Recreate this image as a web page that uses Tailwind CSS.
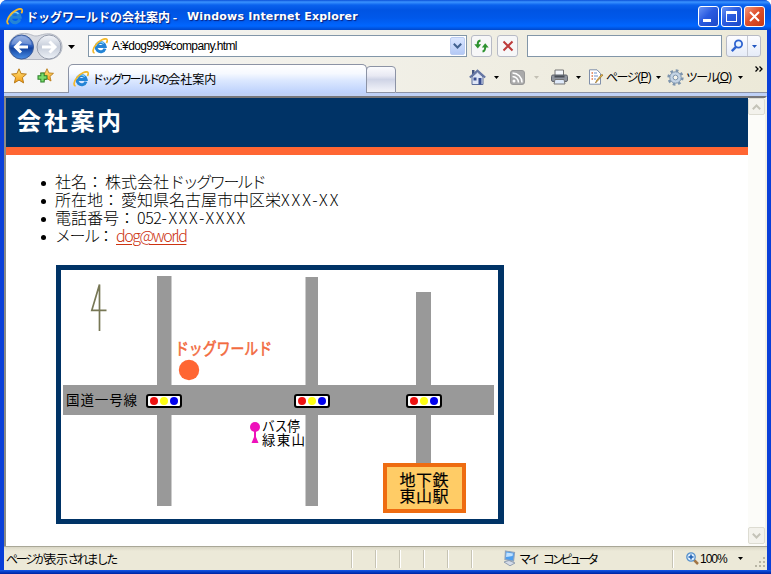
<!DOCTYPE html>
<html lang="ja">
<head>
<meta charset="utf-8">
<title>ドッグワールドの会社案内</title>
<script src="https://cdn.jsdelivr.net/npm/@tailwindcss/browser@4"></script>
</head>
<body class="w-[771px] h-[574px] overflow-hidden bg-white font-['Noto_Sans_CJK_JP',sans-serif] text-black">
<svg width="0" height="0" class="absolute">
  <defs>
    <linearGradient id="ball" x1="0" y1="0" x2="0" y2="1"><stop offset="0" stop-color="#7f9fdc"/><stop offset=".45" stop-color="#2c5fc0"/><stop offset=".55" stop-color="#12429f"/><stop offset="1" stop-color="#4a90e8"/></linearGradient>
    <linearGradient id="grey" x1="0" y1="0" x2="0" y2="1"><stop offset="0" stop-color="#f4f6fa"/><stop offset=".5" stop-color="#c6cdda"/><stop offset="1" stop-color="#eef2f8"/></linearGradient>
    <linearGradient id="gold" x1="0" y1="0" x2="0" y2="1"><stop offset="0" stop-color="#ffe680"/><stop offset="1" stop-color="#f59b12"/></linearGradient>
  </defs>
  <symbol id="ie" viewBox="0 0 16 16">
    <path d="M13 10.600A4.600 4.600 0 1 1 13.200 8.600H5" fill="none" stroke="#2484d6" stroke-width="3"/>
    <path d="M4.200 7.600A4.200 4.200 0 0 1 11.800 5.600" fill="none" stroke="#7fd0fa" stroke-width="1.200"/>
    <path d="M2.600 15C.2 14.600 .6 10.500 4.300 6.300C8.300 1.800 13.500 -.2 14.900 1.400C15.600 2.300 15.200 3.700 14.400 5" fill="none" stroke="#f3b92c" stroke-width="1.700"/>
  </symbol>
  <symbol id="star" viewBox="0 0 16 16">
    <path d="M8 .8 10.100 5.600 15.400 6.100 11.400 9.600 12.600 14.900 8 12.100 3.400 14.900 4.600 9.600 .6 6.100 5.900 5.600Z" fill="url(#gold)" stroke="#b87a18" stroke-width="1"/>
  </symbol>
  <symbol id="signal" viewBox="0 0 36 14">
    <rect x="1" y="1" width="34" height="12" rx="2" fill="#fff" stroke="#000" stroke-width="2"/>
    <circle cx="8" cy="7" r="4" fill="#ee1111"/><circle cx="18" cy="7" r="4" fill="#ffff11"/><circle cx="28" cy="7" r="4" fill="#0000ee"/>
  </symbol>
</svg>

<div class="w-[771px] h-[574px] flex flex-col rounded-t-[7px] overflow-hidden bg-[#0a3fd8]">
  <!-- title bar -->
  <header class="h-[30px] shrink-0 flex items-center pl-[6px] pr-[6px] bg-[linear-gradient(to_bottom,#0a50d8_0,#3a93ff_2px,#0a62ee_5px,#0054e3_10px,#0058ea_18px,#0066ff_26px,#0048cc_30px)]">
    <svg class="w-[17px] h-[17px] mt-[2px]"><use href="#ie"/></svg>
    <h1 class="ml-[3px] mt-[3px] flex text-white font-bold text-[12px] leading-[16px] whitespace-nowrap [text-shadow:1px_1px_1px_#0a1f7a]"><span class="w-[161px] tracking-[0px]">ドッグワールドの会社案内 -</span><span class="font-['DejaVu_Sans','Liberation_Sans',sans-serif] text-[11px] tracking-[0.18px]">Windows Internet Explorer</span></h1>
    <div class="ml-auto mt-[3px] flex gap-[2px]">
      <div class="w-[21px] h-[21px] rounded-[3px] border border-white bg-[linear-gradient(135deg,#6a94f5,#2a5be0_45%,#1c49c8)] p-[4px] flex items-end"><div class="w-[8px] h-[3px] bg-white"></div></div>
      <div class="w-[21px] h-[21px] rounded-[3px] border border-white bg-[linear-gradient(135deg,#6a94f5,#2a5be0_45%,#1c49c8)] p-[4px]"><div class="w-[11px] h-[11px] border border-t-[3px] border-white"></div></div>
      <div class="w-[21px] h-[21px] rounded-[3px] border border-white bg-[linear-gradient(135deg,#f09a80,#e0502c_45%,#c63a14)] flex items-center justify-center"><svg class="w-[13px] h-[13px]" viewBox="0 0 13 13"><path d="M2 2 11 11M11 2 2 11" stroke="#fff" stroke-width="2"/></svg></div>
    </div>
  </header>

  <div class="flex-1 min-h-0 mx-[4px] flex flex-col bg-[#ece9d8]">
    <!-- address row -->
    <div class="h-[33px] shrink-0 flex items-center pl-[4px] pb-px bg-linear-to-r from-[#f6f6f6] to-[#ece9d8]">
      <svg class="w-[56px] h-[29px] shrink-0" viewBox="0 0 56 29">
        <path d="M14 1.500C22 1 24 4 28 4S36 1 43 2C58 5 58 26 41 27.500H13C-3 25-3 4 14 1.500Z" fill="#d8dbe2" stroke="#b4b8c2"/>
        <circle cx="13.500" cy="15" r="12" fill="url(#ball)" stroke="#3b5c9c"/><path d="M3.500 13A10 9 0 0 1 23.500 13Q14 10 3.500 13" fill="#fff" opacity=".25"/>
        <path d="M20 15H8M13 9.500 7.500 15 13 20.500" fill="none" stroke="#fff" stroke-width="3"/>
        <circle cx="41" cy="15" r="12" fill="url(#grey)" stroke="#959cab"/>
        <path d="M34 15H46M41.500 9.500 47 15 41.500 20.500" fill="none" stroke="#fff" stroke-width="3"/>
      </svg>
      <svg class="w-[7px] h-[4px] ml-[4px] mt-[1px] shrink-0" viewBox="0 0 7 4"><path d="M0 0H7L3.500 4Z"/></svg>
      <div class="ml-[13px] w-[379px] h-[22px] shrink-0 border border-[#8296a8] bg-white flex items-center pl-[3px] pr-px">
        <svg class="w-[16px] h-[16px]"><use href="#ie"/></svg>
        <span class="ml-[4px] text-[12px] leading-[18px] font-['Liberation_Sans',sans-serif] tracking-[-0.62px]">A:¥dog999¥company.html</span>
        <div class="ml-auto w-[15px] h-[18px] rounded-[2px] bg-linear-to-b from-[#dbe6ff] to-[#b4c9f5] border border-[#bccdf2] flex items-center justify-center"><svg class="w-[9px] h-[6px]" viewBox="0 0 9 6"><path d="M.8 .8 4.500 4.500 8.200 .8" fill="none" stroke="#42618f" stroke-width="2"/></svg></div>
      </div>
      <div class="ml-[4px] w-[21px] h-[22px] shrink-0 rounded-[3px] border border-[#b7bac5] bg-[#f7f7f8] flex items-center justify-center">
        <svg class="w-[15px] h-[14px]" viewBox="0 0 15 14"><path d="M6.500 1.500Q3.800 2 3.800 4.500V6M11.200 8Q11.200 12 8.500 12.500" fill="none" stroke="#2d922f" stroke-width="2"/><path d="M.3 5.300H7.200L3.800 9.500ZM7.800 8.500H14.700L11.200 4.300Z" fill="#2d922f"/></svg>
      </div>
      <div class="ml-[5px] w-[21px] h-[22px] shrink-0 rounded-[3px] border border-[#b7bac5] bg-[#f7f7f8] flex items-center justify-center">
        <svg class="w-[12px] h-[12px]" viewBox="0 0 12 12"><path d="M1.500 1.500 10.500 10.500M10.500 1.500 1.500 10.500" stroke="#bd3a3a" stroke-width="2"/></svg>
      </div>
      <div class="ml-[9px] w-[195px] h-[22px] shrink-0 border border-[#8296a8] bg-white"></div>
      <div class="ml-[4px] w-[35px] h-[22px] shrink-0 rounded-[3px] border border-[#b7bac5] bg-linear-to-b from-[#fdfdff] to-[#e6ecf8] flex">
        <div class="w-[21px] border-r border-[#c4c8d2] flex items-center justify-center"><svg class="w-[14px] h-[14px]" viewBox="0 0 14 14"><circle cx="8.500" cy="5" r="3.600" fill="#e8f3ff" stroke="#2d62d0" stroke-width="1.800"/><path d="M6 7.800 1.800 12.200" stroke="#2d62d0" stroke-width="2.400"/></svg></div>
        <div class="flex-1 flex items-center justify-center"><svg class="w-[5px] h-[3px]" viewBox="0 0 5 3"><path d="M0 0H5L2.500 3Z" fill="#1f55c0"/></svg></div>
      </div>
    </div>

    <!-- tabs and command bar -->
    <div class="h-[30px] shrink-0 flex items-end bg-linear-to-r from-[#f6f6f6] to-[#ece9d8]">
      <div class="w-[66px] h-[30px] shrink-0 border-b border-[#8c93a5] flex items-start gap-[10px] pl-[7px] pt-[5px]">
        <svg class="w-[16px] h-[16px]"><use href="#star"/></svg>
        <svg class="w-[17px] h-[16px]" viewBox="0 0 17 16"><use href="#star" x="3" y="0" width="14" height="14"/><path d="M5.500 4.500V14.500M.5 9.500H10.500" stroke="#287f28" stroke-width="4.400"/><path d="M5.500 5.500V13.500M1.500 9.500H9.500" stroke="#79dc68" stroke-width="2.400"/></svg>
      </div>
      <div class="-ml-[2px] w-[299px] h-[29px] shrink-0 rounded-t-[5px] border border-b-0 border-[#8c93a5] bg-[linear-gradient(to_bottom,#fff,#f6f9ff_30%,#dce8ff_55%,#bcd1fc)] flex items-center pl-[4px]">
        <svg class="w-[16px] h-[16px]"><use href="#ie"/></svg>
        <span class="ml-[3px] text-[12px] leading-[16px] whitespace-nowrap tracking-[-2.6px]">ドッグワールドの<span class="tracking-normal pl-px">会社案内</span></span>
      </div>
      <div class="-ml-px w-[30px] h-[27px] shrink-0 rounded-t-[4px] border border-[#8c93a5] bg-[linear-gradient(to_bottom,#fbfbfd,#e8e9f3_35%,#cfd4e6_50%,#f4f5fa)]"></div>
      <div class="flex-1 h-[30px] border-b border-[#8c93a5] relative">
        <div class="flex items-center h-[28px] pl-[73px] text-[12px] leading-[16px] whitespace-nowrap">
          <svg class="w-[17px] h-[17px] shrink-0" viewBox="0 0 17 17"><path d="M3 8V15.500H14V8L8.500 3Z" fill="#dfe6f6" stroke="#5c6e9a"/><path d="M3 1H5.500V5L3 7Z" fill="#45557f"/><path d="M.8 8.500 8.500 1.500 16.200 8.500" fill="none" stroke="#6576a4" stroke-width="2"/><path d="M4.500 8.500H7.500V11.500H4.500ZM9.500 9H12.500V15.500H9.500Z" fill="#3b4f91"/></svg>
          <svg class="w-[5px] h-[3px] ml-[8px] shrink-0" viewBox="0 0 5 3"><path d="M0 0H5L2.500 3Z"/></svg>
          <svg class="w-[15px] h-[15px] ml-[11px] shrink-0" viewBox="0 0 15 15"><rect x=".5" y=".5" width="14" height="14" rx="2.500" fill="#aaa" stroke="#999"/><circle cx="4" cy="11" r="1.500" fill="#fff"/><path d="M2.500 6.500A6 6 0 0 1 8.500 12.500M2.500 3A9.500 9.500 0 0 1 12 12.500" fill="none" stroke="#fff" stroke-width="1.600"/></svg>
          <svg class="w-[5px] h-[3px] ml-[9px] shrink-0" viewBox="0 0 5 3"><path d="M0 0H5L2.500 3Z" fill="#c3c0b4"/></svg>
          <svg class="w-[17px] h-[16px] ml-[12px] shrink-0" viewBox="0 0 17 16"><path d="M4 6V1H12.500V6" fill="#f4f7fb" stroke="#777"/><rect x=".5" y="6" width="16" height="6.500" rx="1.500" fill="#8f949d" stroke="#60646d"/><path d="M3.500 7.500H13.500" stroke="#474c55" stroke-width="2"/><path d="M4 10.500H13L14 15H3Z" fill="#dfeafa" stroke="#777"/></svg>
          <svg class="w-[5px] h-[3px] ml-[8px] shrink-0" viewBox="0 0 5 3"><path d="M0 0H5L2.500 3Z"/></svg>
          <svg class="w-[16px] h-[16px] ml-[7px] shrink-0" viewBox="0 0 16 16"><path d="M1.500 .8H9L12.500 4.500V15.200H1.500Z" fill="#fff" stroke="#8190aa"/><path d="M3.500 4H5M3.500 7H5M3.500 10H5" stroke="#dd7747" stroke-width="1.500"/><path d="M6 4H9M6 7H10M6 10H8" stroke="#6c91ca"/><path d="M15 6 9 12.500 7.500 14 8.500 11.500 13.500 5.500Z" fill="#eabd54" stroke="#926c20" stroke-width=".7"/></svg>
          <span class="ml-[2px] w-[47px] flex tracking-[-1.5px]">ページ<span class="font-['Liberation_Sans'] tracking-[-0.8px]">(<u>P</u>)</span></span>
          <svg class="w-[5px] h-[3px] ml-[3px] shrink-0" viewBox="0 0 5 3"><path d="M0 0H5L2.500 3Z"/></svg>
          <svg class="w-[17px] h-[17px] ml-[6px] shrink-0" viewBox="0 0 17 17"><circle cx="8.500" cy="8.500" r="6.900" fill="none" stroke="#7d94ad" stroke-width="2.500" stroke-dasharray="2.700 2.720"/><circle cx="8.500" cy="8.500" r="5.700" fill="#c4d4e5" stroke="#7d94ad"/><circle cx="8.500" cy="8.500" r="2.400" fill="#f4f3eb" stroke="#7d94ad"/></svg>
          <span class="ml-[2px] w-[47px] flex tracking-[-1.8px]">ツール<span class="font-['Liberation_Sans'] tracking-[-0.8px]">(<u>O</u>)</span></span>
          <svg class="w-[5px] h-[3px] ml-[5px] shrink-0" viewBox="0 0 5 3"><path d="M0 0H5L2.500 3Z"/></svg>
        </div>
        <svg class="absolute right-[4px] top-[3px] w-[8px] h-[6px]" viewBox="0 0 8 6"><path d="M.5 .5 3 3 .5 5.500M4.500 .5 7 3 4.500 5.500" fill="none" stroke="#000" stroke-width="1.300"/></svg>
      </div>
    </div>
    <div class="h-[3px] shrink-0 bg-[#bfd1f6]"></div>

    <!-- page viewport -->
    <div class="h-[450px] shrink-0 flex border-t-2 border-l-2 border-r-2 border-t-[#77777a] border-l-[#8a8a86] border-r-[#f2f0e6] bg-white">
      <main class="flex-1 min-w-0">
        <h2 class="h-[57px] bg-[#003366] border-b-8 border-[#ff6633] pl-[11px] pt-[3px] text-white font-bold text-[24px] leading-[38px] tracking-[2.7px]">会社案内</h2>
        <ul class="pt-[17px] pl-[49px] text-[16px] leading-[18px] font-light whitespace-nowrap [&>li]:relative [&>li]:before:absolute [&>li]:before:-left-[14px] [&>li]:before:top-[9px] [&>li]:before:w-[5px] [&>li]:before:h-[5px] [&>li]:before:rounded-full [&>li]:before:bg-black">
          <li>社名<span class="inline-block w-[18px]">：</span>株式会社<span class="tracking-[-2.4px]">ドッグワールド</span></li>
          <li>所在地<span class="inline-block w-[18px]">：</span>愛知県名古屋市中区栄<span class="tracking-[1.9px]">XXX-XX</span></li>
          <li>電話番号<span class="inline-block w-[18px]">：</span><span class="tracking-[-0.4px]">052</span><span class="tracking-[1.65px]">-XXX-XXXX</span></li>
          <li><span class="inline-block w-[43px] tracking-[-1.5px]">メール</span><span class="inline-block w-[18px]">：</span><a href="#" class="text-[#cc3311] underline underline-offset-2 tracking-[-1.5px]">dog@world</a></li>
        </ul>
        <!-- access map -->
        <svg class="ml-[50px] mt-[21px] w-[448px] h-[259px] font-['Noto_Sans_CJK_JP',sans-serif]" viewBox="56 265 448 259">
          <rect x="56" y="265" width="448" height="259" fill="#003366"/>
          <rect x="61" y="270" width="437" height="249" fill="#fff"/>
          <path d="M157 276H171.500V506H157ZM305.500 277H318V506H305.500ZM416 292H431V465H416ZM63 385H494V415H63Z" fill="#999"/>
          <path d="M99.500 331V284.500L91.800 310.300H106.500" fill="none" stroke="#777755" stroke-width="1.700"/>
          <use href="#signal" x="146" y="394" width="36" height="14"/>
          <use href="#signal" x="294" y="394" width="36" height="14"/>
          <use href="#signal" x="406" y="394" width="36" height="14"/>
          <circle cx="189" cy="370" r="10.200" fill="#ff6633"/>
          <text x="175" y="355" font-size="16.500" stroke="#f26b40" stroke-width=".6" fill="#f26b40" textLength="97" lengthAdjust="spacingAndGlyphs">ドッグワールド</text>
          <text x="66" y="405" font-size="13.500" textLength="71">国道一号線</text>
          <circle cx="255" cy="427" r="5" fill="#ee11bb"/><path d="M254 430H256V437L258.500 443H251.500L254 437Z" fill="#ee11bb"/>
          <text x="262" y="431" font-size="13.500" textLength="38" lengthAdjust="spacingAndGlyphs">バス停</text>
          <text x="262" y="445" font-size="13.500" textLength="43">緑東山</text>
          <rect x="385" y="465" width="79" height="46" fill="#ffcc66" stroke="#ee6c11" stroke-width="4"/>
          <text x="399.500" y="486" font-size="16" stroke="#000" stroke-width=".2" textLength="49">地下鉄</text>
          <text x="399.500" y="501.500" font-size="16" stroke="#000" stroke-width=".2" textLength="49">東山駅</text>
        </svg>
      </main>
      <div class="w-[17px] flex flex-col justify-between pb-[2px] bg-[#fcfcf9]">
        <div class="h-[17px] rounded-[2px] border border-[#dddcd2] bg-[#f3f2ec] flex items-center justify-center"><svg class="w-[9px] h-[6px]" viewBox="0 0 9 6"><path d="M.8 5.200 4.500 1.500 8.200 5.200" fill="none" stroke="#c4c3b8" stroke-width="2"/></svg></div>
        <div class="h-[17px] rounded-[2px] border border-[#dddcd2] bg-[#f3f2ec] flex items-center justify-center"><svg class="w-[9px] h-[6px]" viewBox="0 0 9 6"><path d="M.8 .8 4.500 4.500 8.200 .8" fill="none" stroke="#c4c3b8" stroke-width="2"/></svg></div>
      </div>
    </div>

    <!-- status bar -->
    <footer class="flex-1 flex items-center border-t border-[#a9a797] pl-[2px] text-[12px] leading-[16px] whitespace-nowrap bg-[linear-gradient(to_bottom,#d9d6c5,#ece9d8_4px)]">
      <span class="w-[345px] tracking-[-2.3px]">ページが<span class="tracking-[-0.6px]">表示</span>されました</span>
      <div class="flex h-[18px] [&>i]:w-[24px] [&>i]:border-l [&>i]:border-[#c7c4b4] [&>i]:shadow-[inset_1px_0_#fff]"><i></i><i></i><i></i><i></i><i></i><i></i></div>
      <svg class="w-[13px] h-[17px] ml-[8px]" viewBox="0 0 13 17"><path d="M2.500 1 11.500 2.500 10.500 11 2 9.500Z" fill="#4d9ff0" stroke="#8fa3bc" stroke-width="1.200"/><path d="M3.500 2.500 10 3.500 9.500 6 3 7Z" fill="#c1e2ff"/><path d="M1 12 6 10.500 12 13 7 15.800Z" fill="#d5dce8" stroke="#8190a6" stroke-width=".8"/></svg>
      <span class="ml-[3px] w-[153px] tracking-[-3.1px]">マイ<span class="inline-block w-[6px]"></span>コンピュータ</span>
      <div class="w-[14px] h-[18px] border-l border-[#c7c4b4] shadow-[inset_1px_0_#fff]"></div>
      <svg class="w-[13px] h-[13px]" viewBox="0 0 13 13"><path d="M7.500 7.500 12 12" stroke="#a27644" stroke-width="2.500"/><circle cx="5" cy="5" r="4.200" fill="#dff0ff" stroke="#5791cb" stroke-width="1.300"/><path d="M5 2.500V7.500M2.500 5H7.500" stroke="#1c5eb3" stroke-width="1.500"/></svg>
      <span class="ml-px w-[38px] font-['Liberation_Sans',sans-serif] tracking-[-1px]">100%</span>
      <svg class="w-[5px] h-[3px]" viewBox="0 0 5 3"><path d="M0 0H5L2.500 3Z"/></svg>
      <svg class="w-[11px] h-[11px] ml-auto mr-[1px] mt-[8px]" viewBox="0 0 11 11"><path d="M8 0H10V2H8ZM8 4H10V6H8ZM4 4H6V6H4ZM8 8H10V10H8ZM4 8H6V10H4ZM0 8H2V10H0Z" fill="#b8b5a4"/></svg>
    </footer>
  </div>
  <div class="h-[4px] shrink-0 bg-linear-to-b from-[#1658e8] to-[#0020a0]"></div>
</div>
</body>
</html>
